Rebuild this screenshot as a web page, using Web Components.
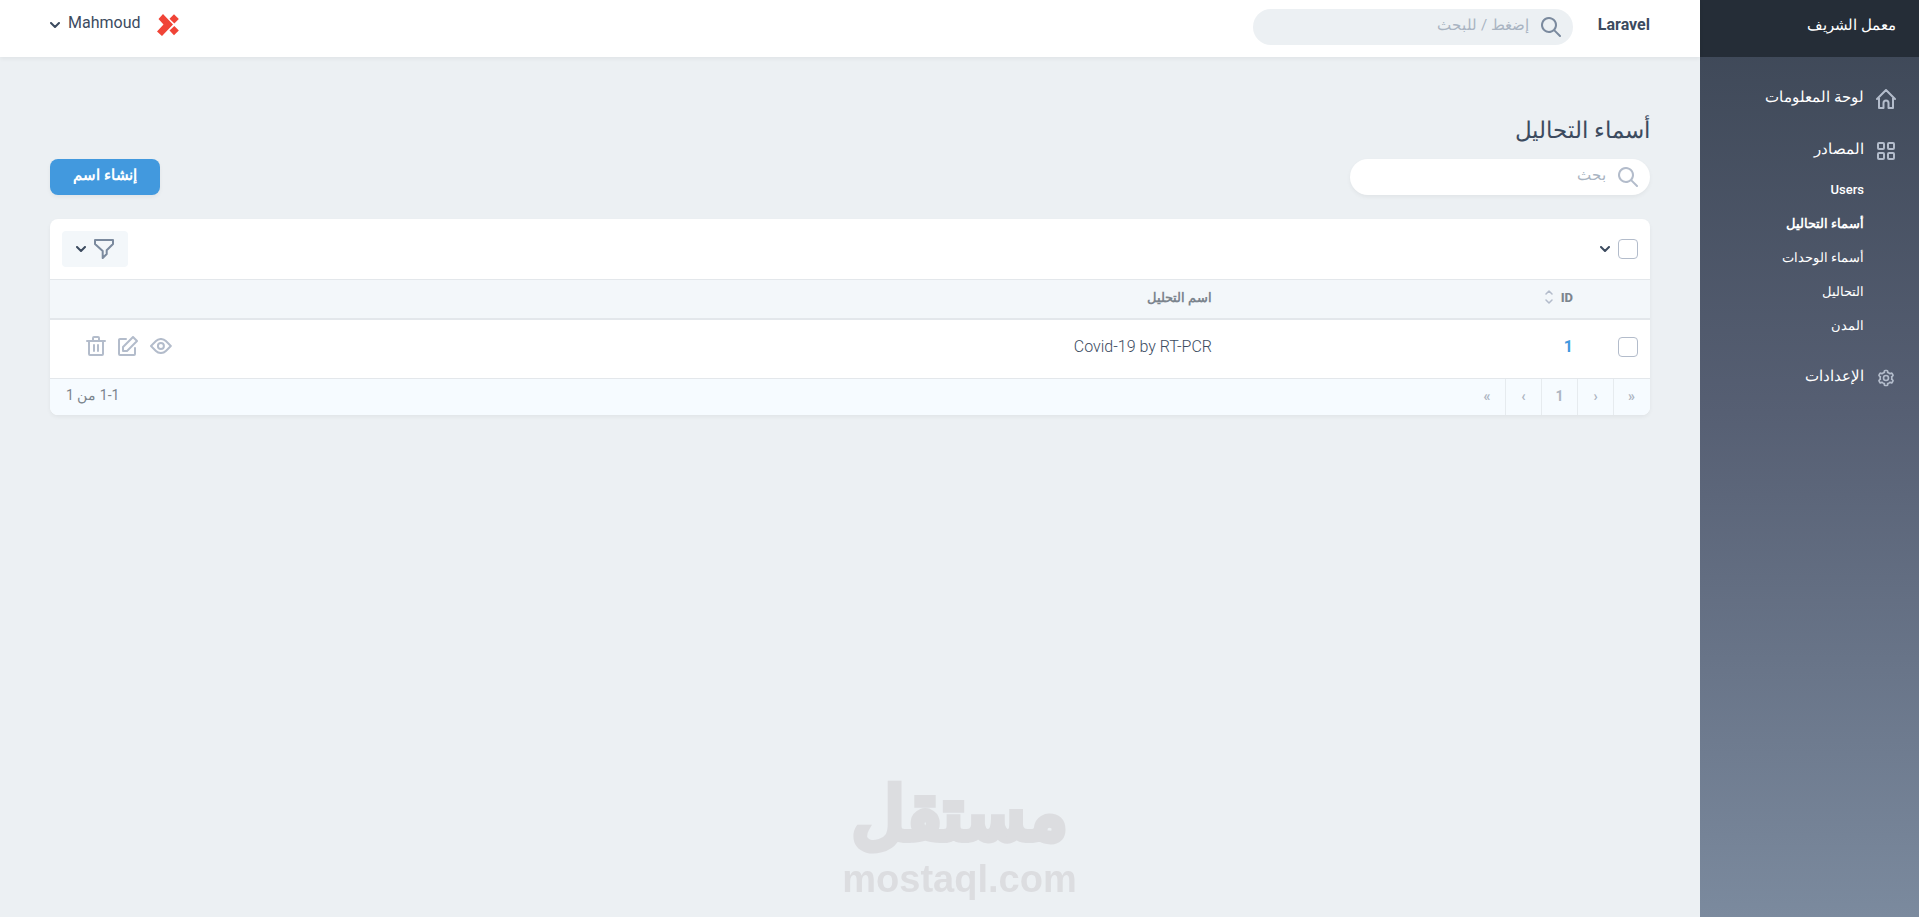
<!DOCTYPE html>
<html lang="ar" dir="rtl">
<head>
<meta charset="utf-8">
<meta name="viewport" content="width=device-width, initial-scale=1">
<title>أسماء التحاليل</title>
<style>
    body {
        margin: 0;
        background: #ecf0f3;
        color: #3c4b5f;
        font-family: Roboto, sans-serif;
        font-size: 16px;
    }
</style>
</head>
<body>

<app-shell>
    <side-bar slot="sidebar" brand="معمل الشريف">
        <nav-item icon="home" label="لوحة المعلومات"></nav-item>
        <nav-item icon="grid" label="المصادر">
            <nav-link>Users</nav-link>
            <nav-link active>أسماء التحاليل</nav-link>
            <nav-link>أسماء الوحدات</nav-link>
            <nav-link>التحاليل</nav-link>
            <nav-link>المدن</nav-link>
        </nav-item>
        <nav-item icon="gear" label="الإعدادات"></nav-item>
    </side-bar>

    <top-bar slot="header" title-text="Laravel">
        <search-field slot="search" kind="global" placeholder="إضغط / للبحث"></search-field>
        <user-menu slot="user">Mahmoud</user-menu>
    </top-bar>

    <page-head heading="أسماء التحاليل" action="إنشاء اسم">
        <search-field placeholder="بحث"></search-field>
    </page-head>

    <resource-table></resource-table>
</app-shell>

<water-mark></water-mark>

<script>
const ICONS = {
    search: ['0 0 20 20', 20, '<path d="M14.32 12.906l5.387 5.387a1 1 0 0 1-1.414 1.414l-5.387-5.387a8 8 0 1 1 1.414-1.414zM8 14A6 6 0 1 0 8 2a6 6 0 0 0 0 12z"/>'],
    home: ['0 0 20 20', 20, '<path d="M1 10 10 1l9 9M3 9V19h4.500v-5a2.500 2.500 0 0 1 5 0v5H17V9" fill="none" stroke="currentColor" stroke-width="2" stroke-linecap="round" stroke-linejoin="round"/>'],
    grid: ['0 0 20 20', 20, '<g fill="none" stroke="currentColor" stroke-width="2"><rect x="2" y="2" width="6" height="6" rx="1"/><rect x="12" y="2" width="6" height="6" rx="1"/><rect x="2" y="12" width="6" height="6" rx="1"/><rect x="12" y="12" width="6" height="6" rx="1"/></g>'],
    gear: ['0 0 24 24', 20, '<path d="M9 4.58V4c0-1.100.9-2 2-2h2a2 2 0 0 1 2 2v.58a8 8 0 0 1 1.920 1.110l.5-.29a2 2 0 0 1 2.740.73l1 1.740a2 2 0 0 1-.73 2.730l-.5.29a8.060 8.060 0 0 1 0 2.220l.5.3a2 2 0 0 1 .73 2.720l-1 1.740a2 2 0 0 1-2.730.73l-.5-.3A8 8 0 0 1 15 19.430V20a2 2 0 0 1-2 2h-2a2 2 0 0 1-2-2v-.58a8 8 0 0 1-1.920-1.110l-.5.29a2 2 0 0 1-2.740-.73l-1-1.740a2 2 0 0 1 .73-2.730l.5-.29a8.060 8.060 0 0 1 0-2.220l-.5-.3a2 2 0 0 1-.73-2.720l1-1.740a2 2 0 0 1 2.730-.73l.5.3A8 8 0 0 1 9 4.570zM7.880 7.640l-.54.51-1.770-1.020-1 1.740 1.760 1.010-.17.73a6.020 6.020 0 0 0 0 2.780l.17.73-1.760 1.010 1 1.740 1.770-1.020.54.51a6 6 0 0 0 2.400 1.400l.72.2V20h2v-2.040l.71-.2a6 6 0 0 0 2.410-1.400l.54-.51 1.770 1.020 1-1.740-1.760-1.010.17-.73a6.020 6.020 0 0 0 0-2.780l-.17-.73 1.760-1.010-1-1.740-1.770 1.020-.54-.51a6 6 0 0 0-2.400-1.400l-.72-.2V4h-2v2.040l-.71.2a6 6 0 0 0-2.410 1.400zM12 16a4 4 0 1 1 0-8 4 4 0 0 1 0 8zm0-2a2 2 0 1 0 0-4 2 2 0 0 0 0 4z"/>'],
    chevron: ['0 0 10 6', 10, '<path d="M1 1l4 4 4-4" fill="none" stroke="currentColor" stroke-width="2" stroke-linecap="round" stroke-linejoin="round"/>'],
    filter: ['0 0 20 20', 20, '<path d="M1 1h18v4l-6.300 6.300V15L8.700 19v-7L1 5z" fill="none" stroke="currentColor" stroke-width="2" stroke-linejoin="round"/>'],
    sort: ['0 0 8 14', 8, '<path d="M1 4l3-3 3 3M1 10l3 3 3-3" fill="none" stroke="currentColor" stroke-width="1.500" stroke-linecap="round" stroke-linejoin="round"/>'],
    view: ['0 0 22 16', 22, '<path d="M16.560 13.660a8 8 0 0 1-11.320 0L.3 8.700a1 1 0 0 1 0-1.420l4.950-4.950a8 8 0 0 1 11.320 0l4.950 4.950a1 1 0 0 1 0 1.420l-4.960 4.960zm-9.900-1.420a6 6 0 0 0 8.480 0L19.380 8l-4.240-4.240a6 6 0 0 0-8.480 0L2.400 8l4.260 4.240zM10.900 12a4 4 0 1 1 0-8 4 4 0 0 1 0 8zm0-2a2 2 0 1 0 0-4 2 2 0 0 0 0 4z"/>'],
    edit: ['0 0 20 20', 20, '<path d="M4.300 10.300l10-10a1 1 0 0 1 1.400 0l4 4a1 1 0 0 1 0 1.400l-10 10a1 1 0 0 1-.7.3H5a1 1 0 0 1-1-1v-4a1 1 0 0 1 .3-.7zM6 14h2.590l9-9L15 2.410l-9 9V14zm10-2a1 1 0 0 1 2 0v6a2 2 0 0 1-2 2H2a2 2 0 0 1-2-2V4c0-1.100.9-2 2-2h6a1 1 0 1 1 0 2H2v14h14v-6z"/>'],
    trash: ['0 0 20 20', 20, '<path d="M6 4V2a2 2 0 0 1 2-2h4a2 2 0 0 1 2 2v2h5a1 1 0 0 1 0 2h-1v12a2 2 0 0 1-2 2H4a2 2 0 0 1-2-2V6H1a1 1 0 1 1 0-2h5zM4 6v12h12V6H4zm8-2V2H8v2h4zM8 8a1 1 0 0 1 1 1v6a1 1 0 0 1-2 0V9a1 1 0 0 1 1-1zm4 0a1 1 0 0 1 1 1v6a1 1 0 0 1-2 0V9a1 1 0 0 1 1-1z"/>'],
    avatar: ['0 0 22 22', 22, '<g fill="#f04437"><path d="M6 0 16 10.500 5 22 0 17.500 6.500 10.500 1.500 5z"/><path d="M17 .2 21.800 5 17.300 9.500 12.500 4.800z"/><path d="M17.300 11.900 21.800 16.500 17 21.200 12.500 16.500z"/></g>']
};

class AppIcon extends HTMLElement {
    constructor() {
        super();
        this.attachShadow({mode: "open"});
    }

    connectedCallback() {
        const [box, width, shape] = ICONS[this.getAttribute("name")];
        this.shadowRoot.innerHTML = `
            <style>
                :host { display: inline-flex; flex: none; }
                svg { display: block; fill: currentColor; width: ${width}px; }
            </style>
            <svg viewBox="${box}" aria-hidden="true">${shape}</svg>
        `;
    }
}

class AppShell extends HTMLElement {
    constructor() {
        super();
        this.attachShadow({mode: "open"});
    }

    connectedCallback() {
        this.shadowRoot.innerHTML = `
            <style>
                :host {
                    display: flex;
                    min-height: 100vh;
                }

                .content {
                    flex: 1;
                    min-width: 0;
                }

                main {
                    padding: 58px 50px;
                }
            </style>
            <slot name="sidebar"></slot>
            <div class="content">
                <slot name="header"></slot>
                <main><slot></slot></main>
            </div>
        `;
    }
}

class SideBar extends HTMLElement {
    constructor() {
        super();
        this.attachShadow({mode: "open"});
    }

    connectedCallback() {
        this.shadowRoot.innerHTML = `
            <style>
                :host {
                    display: flex;
                    flex-direction: column;
                    flex: none;
                    width: 219px;
                    color: #fff;
                    font-size: 15px;
                    font-weight: 500;
                    background: linear-gradient(#3c4655, #565f73 45%, #7b8a9e);
                }

                .brand {
                    display: block;
                    height: 57px;
                    line-height: 50px;
                    padding: 0 23px;
                    box-sizing: border-box;
                    color: inherit;
                    text-decoration: none;
                    background: #252d37;
                }

                nav {
                    display: flex;
                    flex-direction: column;
                    gap: 32px;
                    padding: 32px 23px;
                }
            </style>
            <a class="brand" href="#">${this.getAttribute("brand")}</a>
            <nav><slot></slot></nav>
        `;
    }
}

class NavItem extends HTMLElement {
    constructor() {
        super();
        this.attachShadow({mode: "open"});
    }

    connectedCallback() {
        const links = this.children.length ? `<div class="links"><slot></slot></div>` : "";
        this.shadowRoot.innerHTML = `
            <style>
                :host { display: block; }

                .title {
                    display: flex;
                    gap: 12px;
                    height: 20px;
                    line-height: 16px;
                    color: inherit;
                    text-decoration: none;
                }

                app-icon { color: #b3bccb; }

                .links {
                    display: flex;
                    flex-direction: column;
                    gap: 14px;
                    padding: 19px 32px 0 0;
                }
            </style>
            <a class="title" href="#"><app-icon name="${this.getAttribute("icon")}"></app-icon>${this.getAttribute("label")}</a>
            ${links}
        `;
    }
}

class NavLink extends HTMLElement {
    constructor() {
        super();
        this.attachShadow({mode: "open"});
    }

    connectedCallback() {
        this.shadowRoot.innerHTML = `
            <style>
                :host {
                    display: block;
                    font-size: 13px;
                    line-height: 20px;
                }

                :host([active]) { font-weight: 700; }

                a {
                    color: inherit;
                    text-decoration: none;
                }
            </style>
            <a href="#"><slot></slot></a>
        `;
    }
}

class TopBar extends HTMLElement {
    constructor() {
        super();
        this.attachShadow({mode: "open"});
    }

    connectedCallback() {
        this.shadowRoot.innerHTML = `
            <style>
                :host {
                    display: flex;
                    align-items: flex-start;
                    gap: 25px;
                    height: 57px;
                    padding: 9px 50px 0;
                    box-sizing: border-box;
                    background: #fff;
                    box-shadow: 0 2px 4px rgba(0, 0, 0, .05);
                }

                .title {
                    line-height: 32px;
                    font-weight: 700;
                    color: inherit;
                    text-decoration: none;
                }

                ::slotted(user-menu) { margin-inline-start: auto; }
            </style>
            <a class="title" href="#">${this.getAttribute("title-text")}</a>
            <slot name="search"></slot>
            <slot name="user"></slot>
        `;
    }
}

class SearchField extends HTMLElement {
    constructor() {
        super();
        this.attachShadow({mode: "open"});
    }

    connectedCallback() {
        const hint = this.getAttribute("placeholder");
        this.shadowRoot.innerHTML = `
            <style>
                :host {
                    display: block;
                    width: 300px;
                    color: #b3bccb;
                    border-radius: 18px;
                    background: #fff;
                    box-shadow: 0 2px 4px rgba(0, 0, 0, .05);
                }

                :host([kind="global"]) {
                    width: 320px;
                    color: #7b8a9e;
                    background: #ecf0f3;
                    box-shadow: none;
                }

                label {
                    display: flex;
                    align-items: center;
                    gap: 12px;
                    height: 36px;
                    padding: 0 12px;
                }

                input {
                    flex: 1;
                    min-width: 0;
                    height: 32px;
                    padding: 0 0 4px;
                    box-sizing: border-box;
                    border: 0;
                    outline: 0;
                    background: none;
                    color: #7b8a9e;
                    font: inherit;
                    font-size: 15px;
                }

                input::-webkit-search-cancel-button { display: none; }

                input::placeholder {
                    color: #a9b4c2;
                    opacity: 1;
                }
            </style>
            <label>
                <app-icon name="search"></app-icon>
                <input type="search" placeholder="${hint}" aria-label="${hint}">
            </label>
        `;
    }
}

class UserMenu extends HTMLElement {
    constructor() {
        super();
        this.attachShadow({mode: "open"});
    }

    connectedCallback() {
        this.shadowRoot.innerHTML = `
            <style>
                :host { display: block; }

                button {
                    display: flex;
                    align-items: center;
                    gap: 8px;
                    padding: 0;
                    border: 0;
                    background: none;
                    color: inherit;
                    font: inherit;
                }

                .name {
                    padding-right: 9px;
                    padding-bottom: 4px;
                    line-height: 28px;
                }
            </style>
            <button type="button">
                <app-icon name="avatar"></app-icon>
                <span class="name"><slot></slot></span>
                <app-icon name="chevron"></app-icon>
            </button>
        `;
    }
}

class PageHead extends HTMLElement {
    constructor() {
        super();
        this.attachShadow({mode: "open"});
    }

    connectedCallback() {
        this.shadowRoot.innerHTML = `
            <style>
                :host {
                    display: block;
                    margin-bottom: 24px;
                }

                h1 {
                    margin: 0 0 12px;
                    font-size: 23px;
                    font-weight: 400;
                    line-height: 32px;
                }

                .row {
                    display: flex;
                    justify-content: space-between;
                }

                .action {
                    width: 110px;
                    height: 36px;
                    padding: 0 0 4px;
                    border: 0;
                    border-radius: 8px;
                    background: #4299de;
                    box-shadow: 0 2px 4px rgba(0, 0, 0, .05);
                    color: #fff;
                    font: inherit;
                    font-size: 15px;
                    font-weight: 800;
                }
            </style>
            <h1>${this.getAttribute("heading")}</h1>
            <div class="row">
                <slot></slot>
                <button class="action" type="button">${this.getAttribute("action")}</button>
            </div>
        `;
    }
}

class CheckBox extends HTMLElement {
    constructor() {
        super();
        this.attachShadow({mode: "open"});
    }

    connectedCallback() {
        this.shadowRoot.innerHTML = `
            <style>
                :host { display: inline-flex; }

                input {
                    appearance: none;
                    width: 20px;
                    height: 20px;
                    margin: 0;
                    border: 1px solid #b3bccb;
                    border-radius: 4px;
                    background: #fff;
                }

                input:checked { background: #4299de; }
            </style>
            <input type="checkbox" aria-label="${this.getAttribute("label")}">
        `;
    }
}

class PageLinks extends HTMLElement {
    constructor() {
        super();
        this.attachShadow({mode: "open"});
    }

    connectedCallback() {
        this.shadowRoot.innerHTML = `
            <style>
                :host {
                    display: flex;
                    padding-right: 1px;
                }

                button {
                    width: 36px;
                    height: 36px;
                    padding: 0 0 2px;
                    border: 0;
                    border-left: 1px solid #e6ebef;
                    background: none;
                    color: #adb5c2;
                    font: inherit;
                    font-size: 14px;
                    font-weight: 700;
                }

                button:last-child { border-left: 0; }
            </style>
            <button type="button">&laquo;</button>
            <button type="button">&lsaquo;</button>
            <button type="button">1</button>
            <button type="button">&rsaquo;</button>
            <button type="button">&raquo;</button>
        `;
    }
}

class ResourceTable extends HTMLElement {
    constructor() {
        super();
        this.attachShadow({mode: "open"});
    }

    connectedCallback() {
        this.shadowRoot.innerHTML = `
            <style>
                :host {
                    display: block;
                    overflow: hidden;
                    border-radius: 8px;
                    background: #fff;
                    box-shadow: 0 2px 4px rgba(0, 0, 0, .05);
                }

                button {
                    display: inline-flex;
                    align-items: center;
                    padding: 0;
                    border: 0;
                    background: none;
                    color: inherit;
                    font: inherit;
                }

                .tools {
                    display: flex;
                    align-items: center;
                    justify-content: space-between;
                    height: 60px;
                    padding: 0 12px;
                    border-bottom: 1px solid #e3e7eb;
                }

                .select {
                    display: flex;
                    align-items: center;
                    gap: 8px;
                }

                .filter {
                    justify-content: center;
                    gap: 8px;
                    width: 66px;
                    height: 36px;
                    border-radius: 4px;
                    background: #f3f7fa;
                }

                .filter app-icon:first-child { color: #7b8a9e; }

                table {
                    width: 100%;
                    border-collapse: separate;
                    border-spacing: 0;
                    table-layout: fixed;
                }

                th, td {
                    box-sizing: border-box;
                    padding: 0 12px;
                    text-align: start;
                }

                th {
                    height: 40px;
                    padding-bottom: 4px;
                    border-bottom: 2px solid #e3e7eb;
                    background: #f3f7fa;
                    color: #7c858e;
                    font-size: 13px;
                    font-weight: 800;
                }

                td {
                    height: 58px;
                    padding-bottom: 6px;
                    font-weight: 300;
                }

                td.check { padding-bottom: 0; }

                .check { width: 65px; }
                .id { width: 361px; }
                .actions { width: 144px; }

                .sort { gap: 8px; }

                .sort app-icon { color: #b3bccb; }

                td.id a {
                    color: #4299de;
                    font-weight: 700;
                    text-decoration: none;
                }

                .buttons {
                    display: flex;
                    align-items: center;
                    justify-content: flex-end;
                    gap: 12px;
                    padding-left: 24px;
                    color: #b3bccb;
                }

                .footer {
                    display: flex;
                    align-items: center;
                    justify-content: space-between;
                    height: 36px;
                    border-top: 1px solid #e3e7eb;
                    background: #f6fbff;
                }

                .count {
                    padding: 0 16px 4px;
                    color: #7c858e;
                    font-size: 14px;
                }
            </style>
            <div class="tools">
                <div class="select">
                    <check-box label="تحديد الكل"></check-box>
                    <button type="button" aria-label="خيارات التحديد"><app-icon name="chevron"></app-icon></button>
                </div>
                <button class="filter" type="button" aria-label="تصفية">
                    <app-icon name="filter"></app-icon>
                    <app-icon name="chevron"></app-icon>
                </button>
            </div>
            <table>
                <thead>
                    <tr>
                        <th class="check"></th>
                        <th class="id"><button class="sort" type="button">ID <app-icon name="sort"></app-icon></button></th>
                        <th>اسم التحليل</th>
                        <th class="actions"></th>
                    </tr>
                </thead>
                <tbody>
                    <tr>
                        <td class="check"><check-box label="تحديد 1"></check-box></td>
                        <td class="id"><a href="#">1</a></td>
                        <td><span dir="ltr">Covid-19 by RT-PCR</span></td>
                        <td class="actions">
                            <div class="buttons">
                                <button type="button" aria-label="عرض"><app-icon name="view"></app-icon></button>
                                <button type="button" aria-label="تعديل"><app-icon name="edit"></app-icon></button>
                                <button type="button" aria-label="حذف"><app-icon name="trash"></app-icon></button>
                            </div>
                        </td>
                    </tr>
                </tbody>
            </table>
            <div class="footer">
                <page-links></page-links>
                <span class="count">1-1 من 1</span>
            </div>
        `;
    }
}

class WaterMark extends HTMLElement {
    constructor() {
        super();
        this.attachShadow({mode: "open"});
    }

    connectedCallback() {
        this.shadowRoot.innerHTML = `
            <style>
                :host {
                    position: fixed;
                    inset: auto 0 16px;
                    display: flex;
                    flex-direction: column;
                    align-items: center;
                    pointer-events: none;
                    color: #dcdde0;
                    font-weight: 700;
                }

                .mark {
                    font-size: 72px;
                    line-height: 84px;
                    -webkit-text-stroke: 5px #dcdde0;
                    stroke-linejoin: round;
                }

                .site {
                    font-family: "Liberation Sans", sans-serif;
                    font-size: 38px;
                    line-height: 44px;
                }
            </style>
            <span class="mark">مستقل</span>
            <span class="site" dir="ltr">mostaql.com</span>
        `;
    }
}

customElements.define("app-icon", AppIcon);
customElements.define("app-shell", AppShell);
customElements.define("side-bar", SideBar);
customElements.define("nav-item", NavItem);
customElements.define("nav-link", NavLink);
customElements.define("top-bar", TopBar);
customElements.define("search-field", SearchField);
customElements.define("user-menu", UserMenu);
customElements.define("page-head", PageHead);
customElements.define("check-box", CheckBox);
customElements.define("page-links", PageLinks);
customElements.define("resource-table", ResourceTable);
customElements.define("water-mark", WaterMark);
</script>
</body>
</html>
